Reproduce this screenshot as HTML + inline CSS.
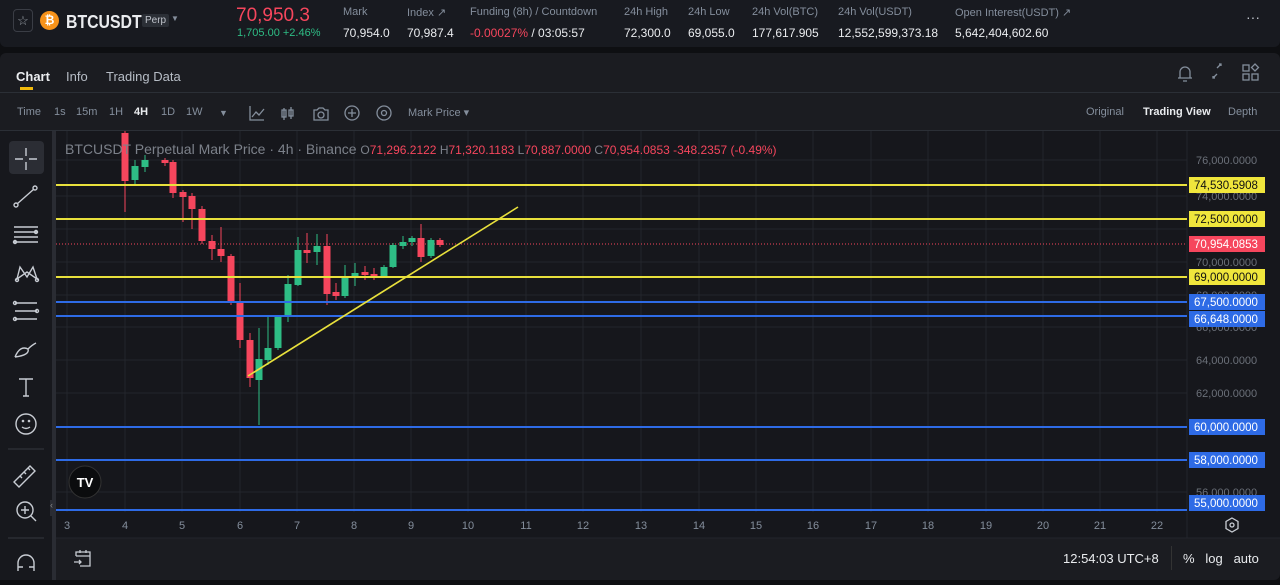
<!DOCTYPE html><html><head><meta charset="utf-8"><style>
*{margin:0;padding:0;box-sizing:border-box}
body{width:1280px;height:585px;background:#0e0f12;font-family:"Liberation Sans",sans-serif;color:#eaecef;overflow:hidden;position:relative}
.a{position:absolute;white-space:nowrap}
.lbl{font-size:11px;color:#848e9c}
.val{font-size:12px;color:#eaecef}
.tb{font-size:11px;color:#848e9c;top:106px}
</style></head><body>
<div class="a" style="left:0;top:0;width:1280px;height:47px;background:#181a20;border-radius:0 0 6px 6px"></div>
<div class="a" style="left:13px;top:9px;width:20px;height:23px;border:1px solid #3a3d45;border-radius:4px;color:#9aa0a8;font-size:13px;text-align:center;line-height:21px">☆</div>
<div class="a" style="left:40px;top:11px;width:19px;height:19px;border-radius:50%;background:#f7931a;color:#fff;font-size:12px;font-weight:bold;text-align:center;line-height:19px">₿</div>
<div class="a" style="left:66px;top:12px;font-size:18px;font-weight:bold;transform:scaleX(0.88);transform-origin:left">BTCUSDT</div>
<div class="a" style="left:142px;top:14px;font-size:10px;background:#2b2f36;color:#c0c4cc;padding:1px 3px;border-radius:2px">Perp</div>
<div class="a" style="left:171px;top:14px;font-size:8px;color:#848e9c">▼</div>
<div class="a" style="left:236px;top:5px;font-size:19px;color:#f6465d">70,950.3</div>
<div class="a" style="left:237px;top:27px;font-size:11px;color:#2ebd85">1,705.00 +2.46%</div>
<div class="a lbl" style="left:343px;top:6px">Mark</div><div class="a val" style="left:343px;top:26px">70,954.0</div>
<div class="a lbl" style="left:407px;top:6px">Index ↗</div><div class="a val" style="left:407px;top:26px">70,987.4</div>
<div class="a lbl" style="left:470px;top:6px">Funding (8h) / Countdown</div><div class="a val" style="left:470px;top:26px"><span style="color:#f6465d">-0.00027%</span> / 03:05:57</div>
<div class="a lbl" style="left:624px;top:6px">24h High</div><div class="a val" style="left:624px;top:26px">72,300.0</div>
<div class="a lbl" style="left:688px;top:6px">24h Low</div><div class="a val" style="left:688px;top:26px">69,055.0</div>
<div class="a lbl" style="left:752px;top:6px">24h Vol(BTC)</div><div class="a val" style="left:752px;top:26px">177,617.905</div>
<div class="a lbl" style="left:838px;top:6px">24h Vol(USDT)</div><div class="a val" style="left:838px;top:26px">12,552,599,373.18</div>
<div class="a lbl" style="left:955px;top:6px">Open Interest(USDT) ↗</div><div class="a val" style="left:955px;top:26px">5,642,404,602.60</div>
<div class="a" style="left:1246px;top:9px;font-size:14px;color:#c0c4cc">···</div>

<div class="a" style="left:0;top:53px;width:1280px;height:527px;background:#1b1c21;border-radius:6px"></div>
<div class="a" style="left:16px;top:69px;font-size:13px;font-weight:bold">Chart</div>
<div class="a" style="left:20px;top:87px;width:13px;height:3px;background:#f0b90b"></div>
<div class="a" style="left:66px;top:69px;font-size:13px;color:#b7bdc6">Info</div>
<div class="a" style="left:106px;top:69px;font-size:13px;color:#b7bdc6">Trading Data</div>
<svg class="a" style="left:1170px;top:60px" width="100" height="26" fill="none" stroke="#848e9c" stroke-width="1.3">
<path d="M10 18 v-6 a5 5 0 0 1 10 0 v6 h2 h-14 M13 21 h4"/>
<path d="M43 18 l4 -4 M47 8 l4 -4 M49 4 h2 v2 M43 16 v2 h2"/>
<rect x="73" y="5" width="6" height="6"/><rect x="73" y="14" width="6" height="6"/><rect x="82" y="14" width="6" height="6"/><path d="M85 4 l3.5 3.5 -3.5 3.5 -3.5 -3.5z"/>
</svg>
<div class="a" style="left:0;top:92px;width:1280px;height:1px;background:#2b2f36"></div>
<div class="a tb" style="left:17px">Time</div><div class="a tb" style="left:54px">1s</div><div class="a tb" style="left:76px">15m</div><div class="a tb" style="left:109px">1H</div><div class="a tb" style="left:134px;color:#eaecef;font-weight:bold">4H</div><div class="a tb" style="left:161px">1D</div><div class="a tb" style="left:186px">1W</div><div class="a tb" style="left:219px;font-size:9px;top:108px">▼</div>
<svg class="a" style="left:245px;top:102px" width="150" height="22" fill="none" stroke="#848e9c" stroke-width="1.3">
<path d="M5 4 v14 h14 M7 15 l4 -5 3 3 5 -6"/>
<path d="M39 6 v12 M37 8 h4 v7 h-4z M46 5 v12 M44 8 h4 v6 h-4z"/>
<path d="M69 8 h3 l2 -2 h4 l2 2 h3 v10 h-14z"/><circle cx="76" cy="13" r="3"/>
<circle cx="107" cy="11" r="7"/><path d="M107 7 v8 M103 11 h8"/>
<circle cx="139" cy="11" r="7"/><circle cx="139" cy="11" r="2.5"/>
</svg>
<div class="a tb" style="left:408px">Mark Price ▾</div>
<div class="a tb" style="left:1086px">Original</div>
<div class="a tb" style="left:1143px;color:#eaecef;font-weight:bold">Trading View</div>
<div class="a tb" style="left:1228px">Depth</div>

<div class="a" style="left:0;top:130px;width:1280px;height:1px;background:#2b2f36"></div>
<div class="a" style="left:0;top:131px;width:52px;height:449px;background:#17181d"></div>
<div class="a" style="left:52px;top:131px;width:4px;height:449px;background:#2a2c33"></div>
<div class="a" style="left:56px;top:131px;width:1224px;height:407px;background:#16171c"></div>
<div class="a" style="left:9px;top:141px;width:35px;height:33px;background:#2b2d34;border-radius:4px"></div>
<svg class="a" style="left:0;top:131px" width="52" height="449" viewBox="0 0 52 449" fill="none" stroke="#c8ccd3" stroke-width="1.4">
<path d="M26 17 v8 M26 31 v8 M15 28 h8 M29 28 h8"/>
<circle cx="16" cy="74" r="2"/><circle cx="35" cy="57" r="2"/><line x1="17" y1="73" x2="34" y2="58"/>
<line x1="14" y1="96" x2="38" y2="96"/><line x1="14" y1="101" x2="38" y2="101"/><line x1="14" y1="106" x2="38" y2="106"/><line x1="14" y1="111" x2="38" y2="111"/><circle cx="36" cy="101" r="1.5"/><circle cx="15" cy="111" r="1.5"/>
<path d="M17 148 L20 136 L27 146 L33 136 L37 148 L27 141 Z"/><circle cx="17" cy="149" r="1.5"/><circle cx="37" cy="149" r="1.5"/>
<path d="M15 172 h22 M15 180 h22 M15 188 h22"/><circle cx="15" cy="172" r="1.5"/><circle cx="37" cy="180" r="1.5"/><circle cx="15" cy="188" r="1.5"/>
<path d="M15 226 q5 -12 13 -8 q2 6 -13 8 M28 218 q4 -4 8 -6"/>
<path d="M19 248 h14 M26 248 v17 M23 265 h6"/>
<circle cx="26" cy="293" r="10"/><path d="M22 296 q4 3 8 0"/><circle cx="23" cy="290" r="0.6"/><circle cx="29" cy="290" r="0.6"/>
<line x1="8" y1="318" x2="44" y2="318" stroke="#2b2d34"/>
<path d="M14 351 l16 -16 l5 5 l-16 16 z M20 345 l2 2 M24 341 l2 2 M28 337 l2 2"/>
<circle cx="25" cy="379" r="8"/><path d="M31 385 l5 5 M21 379 h8 M25 375 v8"/>
<line x1="8" y1="407" x2="44" y2="407" stroke="#2b2d34"/>
<path d="M18 440 v-8 a8 8 0 0 1 16 0 v8 M18 436 h5 M29 436 h5"/>
</svg>
<svg class="a" style="left:56px;top:131px" width="1224" height="449" viewBox="56 131 1224 449">
<g stroke="#23252c" stroke-width="1">
<line x1="125" y1="131" x2="125" y2="512"/><line x1="182" y1="131" x2="182" y2="512"/><line x1="240" y1="131" x2="240" y2="512"/><line x1="297" y1="131" x2="297" y2="512"/><line x1="354" y1="131" x2="354" y2="512"/><line x1="411" y1="131" x2="411" y2="512"/><line x1="468" y1="131" x2="468" y2="512"/><line x1="526" y1="131" x2="526" y2="512"/><line x1="583" y1="131" x2="583" y2="512"/><line x1="641" y1="131" x2="641" y2="512"/><line x1="699" y1="131" x2="699" y2="512"/><line x1="756" y1="131" x2="756" y2="512"/><line x1="813" y1="131" x2="813" y2="512"/><line x1="871" y1="131" x2="871" y2="512"/><line x1="928" y1="131" x2="928" y2="512"/><line x1="986" y1="131" x2="986" y2="512"/><line x1="1043" y1="131" x2="1043" y2="512"/><line x1="1100" y1="131" x2="1100" y2="512"/><line x1="1157" y1="131" x2="1157" y2="512"/><line x1="67" y1="131" x2="67" y2="512"/>
<line x1="56" y1="160" x2="1187" y2="160"/><line x1="56" y1="196" x2="1187" y2="196"/><line x1="56" y1="229" x2="1187" y2="229"/><line x1="56" y1="262" x2="1187" y2="262"/><line x1="56" y1="295" x2="1187" y2="295"/><line x1="56" y1="327" x2="1187" y2="327"/><line x1="56" y1="360" x2="1187" y2="360"/><line x1="56" y1="393" x2="1187" y2="393"/><line x1="56" y1="492" x2="1187" y2="492"/>
<line x1="1187" y1="131" x2="1187" y2="538"/><line x1="56" y1="538" x2="1280" y2="538"/>
</g>
<line x1="56" y1="244" x2="1187" y2="244" stroke="#f6465d" stroke-width="1" stroke-dasharray="1 2"/>
<g id="c"></g>
<g stroke-width="2">
<line x1="56" y1="185" x2="1187" y2="185" stroke="#e8e03c"/><line x1="56" y1="219" x2="1187" y2="219" stroke="#e8e03c"/><line x1="56" y1="277" x2="1187" y2="277" stroke="#e8e03c"/>
<line x1="56" y1="302" x2="1187" y2="302" stroke="#2e6be6"/><line x1="56" y1="316" x2="1187" y2="316" stroke="#2e6be6"/><line x1="56" y1="427" x2="1187" y2="427" stroke="#2e6be6"/><line x1="56" y1="460" x2="1187" y2="460" stroke="#2e6be6"/><line x1="56" y1="510" x2="1187" y2="510" stroke="#2e6be6"/>
<line x1="248" y1="376" x2="518" y2="207" stroke="#e8e03c" stroke-width="1.6"/>
</g>
<circle cx="85" cy="482" r="16" fill="#0b0c0e" stroke="#333"/>
<text x="85" y="487" fill="#fff" font-size="13" font-weight="bold" text-anchor="middle" font-family="Liberation Sans">TV</text>
<g font-family="Liberation Sans" font-size="11" fill="#6b7079">
<text x="1196" y="164">76,000.0000</text><text x="1196" y="364">64,000.0000</text><text x="1196" y="397">62,000.0000</text><text x="1196" y="496">56,000.0000</text><text x="1196" y="200">74,000.0000</text><text x="1196" y="266">70,000.0000</text><text x="1196" y="299">68,000.0000</text><text x="1196" y="331">66,000.0000</text>
</g>
<g font-family="Liberation Sans" font-size="11" fill="#848e9c" text-anchor="middle">
<text x="67" y="529">3</text><text x="125" y="529">4</text><text x="182" y="529">5</text><text x="240" y="529">6</text><text x="297" y="529">7</text><text x="354" y="529">8</text><text x="411" y="529">9</text><text x="468" y="529">10</text><text x="526" y="529">11</text><text x="583" y="529">12</text><text x="641" y="529">13</text><text x="699" y="529">14</text><text x="756" y="529">15</text><text x="813" y="529">16</text><text x="871" y="529">17</text><text x="928" y="529">18</text><text x="986" y="529">19</text><text x="1043" y="529">20</text><text x="1100" y="529">21</text><text x="1157" y="529">22</text>
</g>
<g font-family="Liberation Sans" font-size="11.5">
<rect x="1189" y="177" width="76" height="16" fill="#f0e63c"/><text x="1194" y="189" fill="#111">74,530.5908</text>
<rect x="1189" y="211" width="76" height="16" fill="#f0e63c"/><text x="1194" y="223" fill="#111">72,500.0000</text>
<rect x="1189" y="236" width="76" height="16" fill="#f6465d"/><text x="1194" y="248" fill="#fff">70,954.0853</text>
<rect x="1189" y="269" width="76" height="16" fill="#f0e63c"/><text x="1194" y="281" fill="#111">69,000.0000</text>
<rect x="1189" y="294" width="76" height="16" fill="#2e6be6"/><text x="1194" y="306" fill="#fff">67,500.0000</text>
<rect x="1189" y="311" width="76" height="16" fill="#2e6be6"/><text x="1194" y="323" fill="#fff">66,648.0000</text>
<rect x="1189" y="419" width="76" height="16" fill="#2e6be6"/><text x="1194" y="431" fill="#fff">60,000.0000</text>
<rect x="1189" y="452" width="76" height="16" fill="#2e6be6"/><text x="1194" y="464" fill="#fff">58,000.0000</text>
<rect x="1189" y="495" width="76" height="16" fill="#2e6be6"/><text x="1194" y="507" fill="#fff">55,000.0000</text>
</g>
<path d="M1232 518 l6 3.5 v7 l-6 3.5 -6 -3.5 v-7z" fill="none" stroke="#c8ccd3" stroke-width="1.3"/><circle cx="1232" cy="525" r="2" fill="none" stroke="#c8ccd3" stroke-width="1.3"/>
</svg>
<div class="a" style="left:65px;top:141px;font-size:14px;color:#7c818a">BTCUSDT Perpetual Mark Price · 4h · Binance <span style="font-size:12px">O<span style="color:#f6465d">71,296.2122</span> H<span style="color:#f6465d">71,320.1183</span> L<span style="color:#f6465d">70,887.0000</span> C<span style="color:#f6465d">70,954.0853 -348.2357 (-0.49%)</span></span></div>
<svg class="a" style="left:72px;top:548px" width="22" height="20" fill="none" stroke="#c8ccd3" stroke-width="1.3"><path d="M4 8 v-4 h14 v14 h-10 M4 8 h14 M8 2 v3 M14 2 v3 M2 14 h7 M7 12 l2 2 -2 2"/></svg>
<div class="a" style="left:1063px;top:551px;font-size:13px;color:#eaecef">12:54:03 UTC+8</div>
<div class="a" style="left:1171px;top:546px;width:1px;height:24px;background:#333"></div>
<div class="a" style="left:1183px;top:551px;font-size:13px;color:#eaecef">%&nbsp;&nbsp;&nbsp;log&nbsp;&nbsp;&nbsp;auto</div>
<div class="a" style="left:50px;top:500px;width:6px;height:16px;background:#2a2c33;color:#888;font-size:9px">‹</div>
<script>
var d=[[125,133,181,130,212,0],[135,166,180,160,185,1],[145,160,167,155,172,1],[165,160,163,158,166,0],[173,162,193,160,198,0],[183,192,197,190,222,0],[192,196,209,193,229,0],[202,209,241,206,244,0],[212,241,249,235,260,0],[221,249,256,227,262,0],[231,256,302,254,305,0],[240,302,340,283,348,0],[250,340,378,333,387,0],[259,359,380,328,425,1],[268,348,360,315,365,1],[278,317,348,315,350,1],[288,284,317,275,322,1],[298,250,285,237,286,1],[307,250,253,233,263,0],[317,246,252,234,265,1],[327,246,294,234,305,0],[336,292,296,283,300,0],[345,276,296,265,298,1],[355,273,277,263,286,1],[365,272,275,266,280,0],[374,274,277,268,280,0],[384,267,276,265,278,1],[393,245,267,243,268,1],[403,242,246,236,249,1],[412,238,242,236,246,1],[421,238,257,224,262,0],[431,240,256,238,258,1],[440,240,245,238,247,0]];
var s='';d.forEach(function(c){var col=c[5]?'#2ebd85':'#f6465d';s+='<line x1="'+c[0]+'" x2="'+c[0]+'" y1="'+c[3]+'" y2="'+c[4]+'" stroke="'+col+'"/><rect x="'+(c[0]-3.5)+'" y="'+c[1]+'" width="7" height="'+Math.max(2,c[2]-c[1])+'" fill="'+col+'"/>';});
document.getElementById('c').innerHTML=s;
</script>
</body></html>
